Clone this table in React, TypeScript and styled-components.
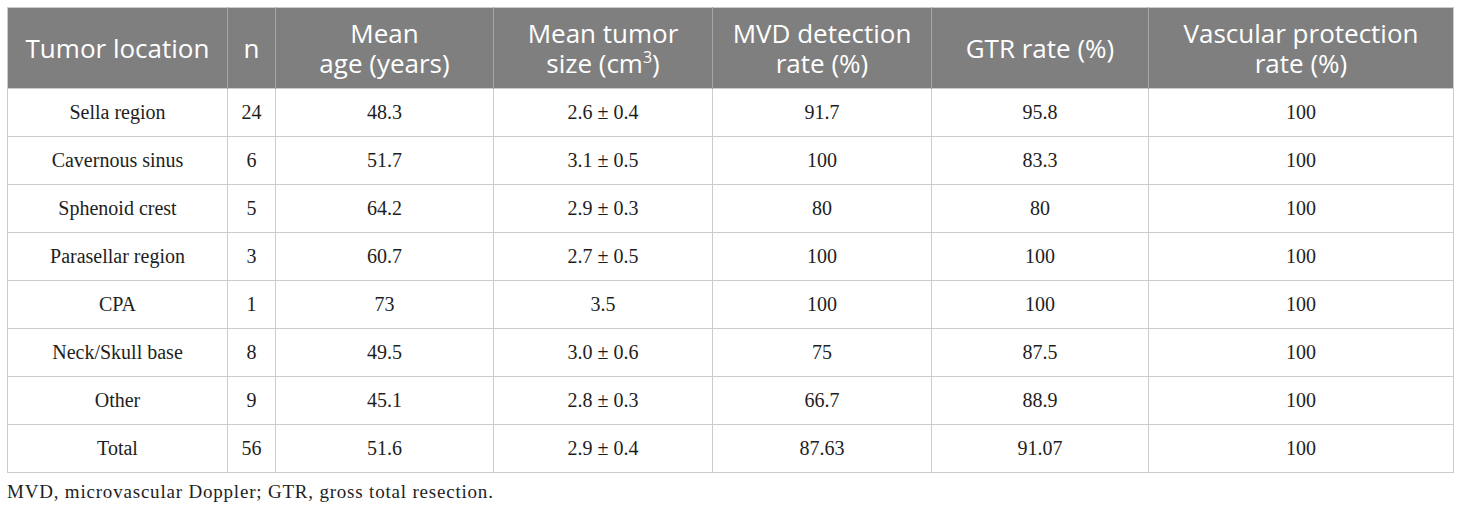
import React from "react";
import styled, { createGlobalStyle } from "styled-components";

const Global = createGlobalStyle`
  html, body { margin: 0; padding: 0; background: #ffffff; }
`;

const Page = styled.div`
  padding: 7px 7px 0 7px;
  width: 1446px;
`;

const Table = styled.table`
  width: 1446px;
  border-collapse: collapse;
  table-layout: fixed;
  border: 1px solid #cccccc;
`;

const HeadCell = styled.th`
  background: #7f7f7f;
  color: #ffffff;
  font-family: "Open Sans", "Noto Sans", sans-serif;
  font-weight: 400;
  font-size: 26px;
  line-height: 30px;
  height: 80px;
  padding: 0 2px;
  text-align: center;
  vertical-align: middle;
  white-space: nowrap;
  border-left: 1px solid #a6a6a6;
  border-right: 1px solid #a6a6a6;
  &:first-child { border-left: 1px solid #cccccc; }
  &:last-child { border-right: 1px solid #cccccc; }
`;

const Cell = styled.td`
  font-family: "Liberation Serif", "Times New Roman", serif;
  font-size: 20px;
  color: #1e1e1e;
  height: 47px;
  padding: 0 8px;
  text-align: center;
  vertical-align: middle;
  border: 1px solid #cccccc;
`;

const Sup = styled.sup`
  font-size: 16px;
  line-height: 0;
`;

const Caption = styled.p`
  margin: 8px 0 0 0;
  font-family: "Liberation Serif", "Times New Roman", serif;
  font-size: 19px;
  letter-spacing: 0.8px;
  color: #1e1e1e;
`;

const widths = [220, 48, 218, 219, 219, 217, 305];

const heads: React.ReactNode[] = [
  "Tumor location",
  "n",
  <>
    Mean
    <br />
    age (years)
  </>,
  <>
    Mean tumor
    <br />
    size (cm<Sup>3</Sup>)
  </>,
  <>
    MVD detection
    <br />
    rate (%)
  </>,
  "GTR rate (%)",
  <>
    Vascular protection
    <br />
    rate (%)
  </>,
];

const rows: string[][] = [
  ["Sella region", "24", "48.3", "2.6 ± 0.4", "91.7", "95.8", "100"],
  ["Cavernous sinus", "6", "51.7", "3.1 ± 0.5", "100", "83.3", "100"],
  ["Sphenoid crest", "5", "64.2", "2.9 ± 0.3", "80", "80", "100"],
  ["Parasellar region", "3", "60.7", "2.7 ± 0.5", "100", "100", "100"],
  ["CPA", "1", "73", "3.5", "100", "100", "100"],
  ["Neck/Skull base", "8", "49.5", "3.0 ± 0.6", "75", "87.5", "100"],
  ["Other", "9", "45.1", "2.8 ± 0.3", "66.7", "88.9", "100"],
  ["Total", "56", "51.6", "2.9 ± 0.4", "87.63", "91.07", "100"],
];

export default function App() {
  return (
    <Page>
      <Global />
      <Table>
        <colgroup>
          {widths.map((w, i) => (
            <col key={i} style={{ width: `${w}px` }} />
          ))}
        </colgroup>
        <thead>
          <tr>
            {heads.map((h, i) => (
              <HeadCell key={i}>{h}</HeadCell>
            ))}
          </tr>
        </thead>
        <tbody>
          {rows.map((r, i) => (
            <tr key={i}>
              {r.map((c, j) => (
                <Cell key={j}>{c}</Cell>
              ))}
            </tr>
          ))}
        </tbody>
      </Table>
      <Caption>MVD, microvascular Doppler; GTR, gross total resection.</Caption>
    </Page>
  );
}
